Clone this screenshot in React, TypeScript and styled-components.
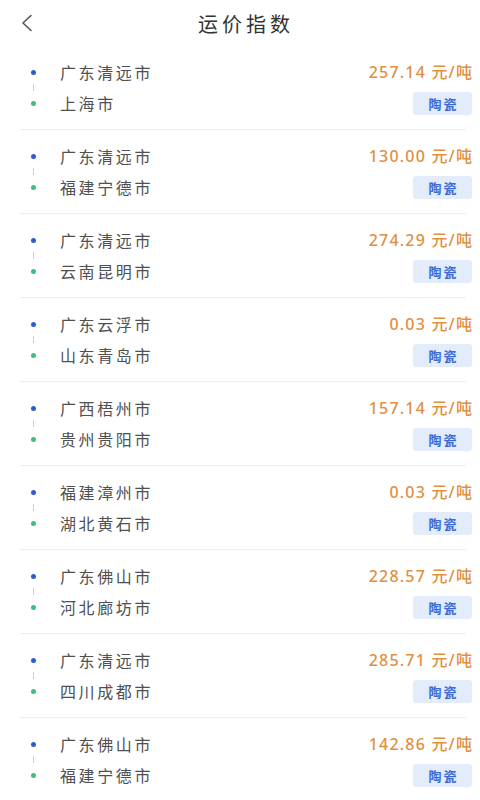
import React from 'react';
import styled, { createGlobalStyle } from 'styled-components';

interface Freight {
  from: string;
  to: string;
  price: string;
  goods: string;
}

const freights: Freight[] = [
  { from: '广东清远市', to: '上海市', price: '257.14', goods: '陶瓷' },
  { from: '广东清远市', to: '福建宁德市', price: '130.00', goods: '陶瓷' },
  { from: '广东清远市', to: '云南昆明市', price: '274.29', goods: '陶瓷' },
  { from: '广东云浮市', to: '山东青岛市', price: '0.03', goods: '陶瓷' },
  { from: '广西梧州市', to: '贵州贵阳市', price: '157.14', goods: '陶瓷' },
  { from: '福建漳州市', to: '湖北黄石市', price: '0.03', goods: '陶瓷' },
  { from: '广东佛山市', to: '河北廊坊市', price: '228.57', goods: '陶瓷' },
  { from: '广东清远市', to: '四川成都市', price: '285.71', goods: '陶瓷' },
  { from: '广东佛山市', to: '福建宁德市', price: '142.86', goods: '陶瓷' },
];

const GlobalStyle = createGlobalStyle`
  html, body {
    margin: 0;
    padding: 0;
    background: #fff;
    font-family: "Noto Sans", "Noto Sans CJK SC", sans-serif;
  }
`;

const Page = styled.div`
  width: 480px;
  height: 800px;
  overflow: hidden;
  background: #fff;
`;

const Header = styled.header`
  height: 46px;
  display: grid;
  grid-template-columns: 52px 1fr 40px;
  align-items: center;
`;

const Back = styled.button`
  border: 0;
  background: none;
  padding: 0 0 0 20px;
  height: 46px;
  display: flex;
  align-items: center;
  color: #555;
`;

const Title = styled.h1`
  margin: 0;
  text-align: center;
  font-size: 20px;
  font-weight: 400;
  letter-spacing: 4px;
  color: #333;
  font-family: "Noto Sans CJK SC", sans-serif;
`;

const List = styled.ul`
  list-style: none;
  margin: 0;
  padding: 0 8px 0 20px;
`;

const Item = styled.li`
  display: flex;
  flex-direction: column;
`;

const Content = styled.div`
  display: flex;
  justify-content: space-between;
  padding: 14px 0;
`;

const Route = styled.div`
  display: grid;
  grid-template-columns: 26px 1fr;
  column-gap: 14px;
`;

const Track = styled.div`
  display: flex;
  flex-direction: column;
  align-items: center;
`;

const DotCell = styled.div`
  height: 24px;
  display: flex;
  align-items: center;
`;

const Dot = styled.span<{ $color: string }>`
  width: 5px;
  height: 5px;
  border-radius: 50%;
  background: ${p => p.$color};
`;

const Connector = styled.span`
  width: 1px;
  height: 7px;
  background: #cfcfcf;
`;

const Places = styled.div`
  display: flex;
  flex-direction: column;
  gap: 7px;
`;

const Place = styled.span`
  height: 24px;
  line-height: 24px;
  font-size: 16px;
  letter-spacing: 2.6px;
  color: #505050;
  font-family: "Noto Sans CJK SC", sans-serif;
`;

const Side = styled.div`
  display: flex;
  flex-direction: column;
  align-items: flex-end;
  gap: 8px;
`;

const Price = styled.span`
  height: 24px;
  line-height: 24px;
  font-size: 16px;
  font-weight: 500;
  letter-spacing: 1.2px;
  margin-right: -1.2px;
  color: #e0903f;
  font-family: "Noto Sans", "Noto Sans CJK SC", sans-serif;
`;

const Tag = styled.span`
  height: 23px;
  line-height: 23px;
  width: 59px;
  text-align: center;
  border-radius: 3px;
  background: #e3ecfb;
  color: #3a68d4;
  font-size: 13px;
  font-weight: 700;
  letter-spacing: 2px;
  text-indent: 2px;
  font-family: "Noto Sans CJK SC", sans-serif;
`;

const Divider = styled.div`
  height: 1px;
  margin-right: 6px;
  background: #ededed;
`;

const App: React.FC = () => (
  <Page>
    <GlobalStyle />
    <Header>
      <Back aria-label="返回">
        <svg width="13" height="18" viewBox="0 0 13 18" fill="none">
          <path d="M11 1.5L3 9l8 7.5" stroke="#555" strokeWidth="1.6" strokeLinecap="round" strokeLinejoin="round" />
        </svg>
      </Back>
      <Title>运价指数</Title>
      <span />
    </Header>
    <List>
      {freights.map((f, i) => (
        <Item key={i}>
          <Content>
            <Route>
              <Track>
                <DotCell><Dot $color="#2c5ad8" /></DotCell>
                <Connector />
                <DotCell><Dot $color="#3ebf80" /></DotCell>
              </Track>
              <Places>
                <Place>{f.from}</Place>
                <Place>{f.to}</Place>
              </Places>
            </Route>
            <Side>
              <Price>{f.price} 元/吨</Price>
              <Tag>{f.goods}</Tag>
            </Side>
          </Content>
          <Divider />
        </Item>
      ))}
    </List>
  </Page>
);

export default App;
